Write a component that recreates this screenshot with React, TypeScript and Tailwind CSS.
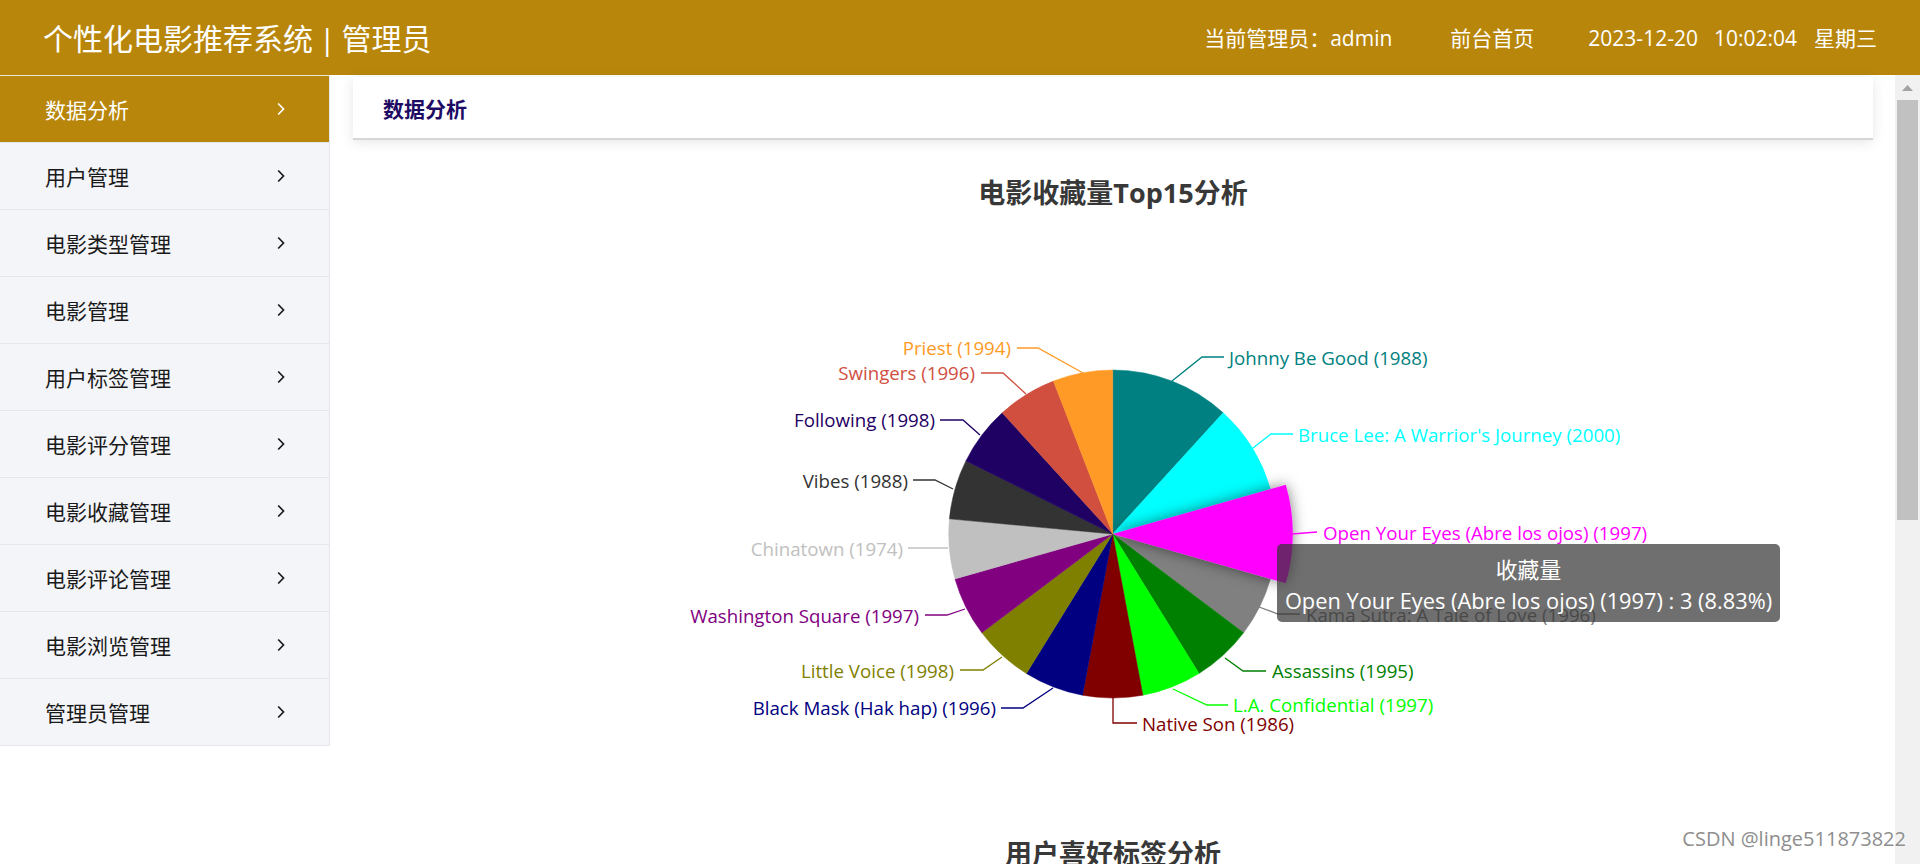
import React from "react";

const OX = 353;
const OY = 208;
const CX = 1112.7 - OX;
const CY = 534 - OY;
const R = 164;
const LY = -2;

type Item = {
  name: string;
  v: number;
  c: string;
  line: number[][];
  t: number[];
  a: "start" | "end";
  hl?: boolean;
};

const items: Item[] = [
  { name: "Johnny Be Good (1988)", v: 4, c: "#008080", line: [[1172, 381], [1202, 359], [1224, 359]], t: [1229, 359], a: "start" },
  { name: "Bruce Lee: A Warrior's Journey (2000)", v: 3, c: "#00ffff", line: [[1253, 448], [1271, 436], [1293, 436]], t: [1298, 436], a: "start" },
  { name: "Open Your Eyes (Abre los ojos) (1997)", v: 3, c: "#ff00ff", line: [[1292, 534], [1317, 534]], t: [1323, 534], a: "start", hl: true },
  { name: "Kama Sutra: A Tale of Love (1996)", v: 2, c: "#808080", line: [[1259, 607], [1278, 616], [1300, 616]], t: [1306, 616], a: "start" },
  { name: "Assassins (1995)", v: 2, c: "#008000", line: [[1225, 658], [1243, 673], [1266, 673]], t: [1272, 672], a: "start" },
  { name: "L.A. Confidential (1997)", v: 2, c: "#00ff00", line: [[1173, 689], [1207, 707], [1228, 707]], t: [1233, 706], a: "start" },
  { name: "Native Son (1986)", v: 2, c: "#800000", line: [[1113, 698], [1113, 725], [1137, 725]], t: [1142, 725], a: "start" },
  { name: "Black Mask (Hak hap) (1996)", v: 2, c: "#000080", line: [[1053, 688], [1023, 710], [1001, 710]], t: [996, 709], a: "end" },
  { name: "Little Voice (1998)", v: 2, c: "#808000", line: [[1002, 657], [983, 672], [960, 672]], t: [954, 672], a: "end" },
  { name: "Washington Square (1997)", v: 2, c: "#800080", line: [[965, 609], [947, 617], [925, 617]], t: [919, 617], a: "end" },
  { name: "Chinatown (1974)", v: 2, c: "#c0c0c0", line: [[948, 548], [933, 550], [908, 550]], t: [903, 550], a: "end" },
  { name: "Vibes (1988)", v: 2, c: "#333333", line: [[953, 489], [935, 482], [913, 482]], t: [908, 482], a: "end" },
  { name: "Following (1998)", v: 2, c: "#1f0063", line: [[980, 435], [963, 422], [940, 422]], t: [935, 421], a: "end" },
  { name: "Swingers (1996)", v: 2, c: "#d04f3f", line: [[1026, 394], [1003, 375], [981, 375]], t: [975, 374], a: "end" },
  { name: "Priest (1994)", v: 2, c: "#ff9a27", line: [[1083, 373], [1038, 350], [1017, 350]], t: [1011, 349], a: "end" },
];

function arcPath(r: number, a0: number, a1: number) {
  const p = (a: number) => {
    const rad = (a * Math.PI) / 180;
    return `${(CX + r * Math.sin(rad)).toFixed(2)},${(CY - r * Math.cos(rad)).toFixed(2)}`;
  };
  const large = a1 - a0 > 180 ? 1 : 0;
  return `M${CX},${CY} L${p(a0)} A${r},${r} 0 ${large} 1 ${p(a1)} Z`;
}

const menu = [
  "数据分析",
  "用户管理",
  "电影类型管理",
  "电影管理",
  "用户标签管理",
  "电影评分管理",
  "电影收藏管理",
  "电影评论管理",
  "电影浏览管理",
  "管理员管理",
];

function Chevron() {
  return (
    <svg width="8" height="14" viewBox="0 0 8 14" fill="none">
      <polyline points="1.2,1.5 6.5,7 1.2,12.5" stroke="currentColor" strokeWidth="1.7" strokeLinejoin="miter" />
    </svg>
  );
}

function PieChart() {
  const total = items.reduce((s, i) => s + i.v, 0);
  let acc = 0;
  const slices = items.map((it) => {
    const a0 = (acc / total) * 360;
    acc += it.v;
    const a1 = (acc / total) * 360;
    return { ...it, a0, a1 };
  });
  const hl = slices.find((s) => s.hl)!;
  return (
    <svg width="1520" height="600" viewBox="0 0 1520 600" className="block">
      <defs>
        <filter id="sh" x="-50%" y="-50%" width="200%" height="200%">
          <feDropShadow dx="0" dy="0" stdDeviation="7" floodColor="#000" floodOpacity="0.5" />
        </filter>
      </defs>
      {slices
        .filter((s) => !s.hl)
        .map((s) => (
          <path key={s.name} d={arcPath(R, s.a0, s.a1)} fill={s.c} stroke={s.c} strokeWidth="0.5" />
        ))}
      <path d={arcPath(180, hl.a0, hl.a1)} fill={hl.c} filter="url(#sh)" />
      {items.map((it) => (
        <g key={it.name}>
          <polyline
            points={it.line.map((p, i) => `${p[0] - OX},${p[1] - OY + (i === 0 ? 0 : LY)}`).join(" ")}
            fill="none"
            stroke={it.c}
            strokeWidth="1.3"
          />
          <text
            x={it.t[0] - OX}
            y={it.t[1] - OY + LY}
            textAnchor={it.a}
            dominantBaseline="central"
            fill={it.c}
            fontSize="18.7"
            fontFamily="'Open Sans', 'Noto Sans CJK SC', sans-serif"
          >
            {it.name}
          </text>
        </g>
      ))}
    </svg>
  );
}

export default function App() {
  return (
    <div className="relative flex h-[864px] w-[1920px] flex-col overflow-hidden bg-white font-['Open_Sans','Noto_Sans_CJK_SC',sans-serif]">
      <header className="flex h-[75px] shrink-0 items-center justify-between bg-[#b8860b] px-[43px] text-white">
        <div className="flex translate-y-[1px] items-center text-[30px] leading-none">
          <span>个性化电影推荐系统</span>
          <span className="mx-[6px]">|</span>
          <span>管理员</span>
        </div>
        <div className="flex translate-y-[1px] items-center text-[21px] leading-none">
          <span>当前管理员：admin</span>
          <span className="ml-[58px]">前台首页</span>
          <span className="ml-[54px]">2023-12-20</span>
          <span className="ml-[16px]">10:02:04</span>
          <span className="ml-[17px]">星期三</span>
        </div>
      </header>

      <div className="flex min-h-0 flex-1">
        <aside className="w-[330px] shrink-0 border-t border-[#ece6d6]">
          {menu.map((m, i) => (
            <div
              key={m}
              className={
                i === 0
                  ? "flex h-[67px] items-center justify-between border-b border-r border-[#e4e7ed] bg-[#b8860b] pl-[45px] pr-[44px] text-[21px] text-white"
                  : "flex h-[67px] items-center justify-between border-b border-r border-[#e4e7ed] bg-[#f4f5f9] pl-[45px] pr-[44px] text-[21px] text-[#1a1a1a]"
              }
            >
              <span className="translate-y-[2px]">{m}</span>
              <Chevron />
            </div>
          ))}
        </aside>

        <main className="flex min-w-0 flex-1">
          <div className="min-w-0 flex-1 pl-[23px] pr-[22px] pt-[2px]">
            <div className="flex h-[63px] items-center border-b-2 border-[#d6d6d6] bg-white pl-[30px] shadow-[0_2px_12px_0_rgba(0,0,0,0.1)]">
              <span className="translate-y-[2px] text-[21px] font-bold text-[#1e0b63]">数据分析</span>
            </div>
            <div className="mt-[38px] text-center text-[27px] font-bold leading-[30px] text-[#383838]">
              电影收藏量Top15分析
            </div>
            <div className="relative">
              <PieChart />
              <div className="absolute left-[924px] top-[336px] flex h-[78px] w-[503px] flex-col items-center rounded-[5px] bg-[rgba(50,50,50,0.7)] pt-[10px] text-[21.8px] leading-[31px] text-white">
                <span>收藏量</span>
                <span>Open Your Eyes (Abre los ojos) (1997) : 3 (8.83%)</span>
              </div>
            </div>
            <div className="mt-[28px] text-center text-[27px] font-bold leading-[36px] text-[#383838]">
              用户喜好标签分析
            </div>
          </div>

          <div className="flex w-[25px] shrink-0 flex-col items-center bg-[#f1f1f1]">
            <div className="flex h-[25px] w-full items-center justify-center">
              <svg width="11" height="6" viewBox="0 0 11 6">
                <polygon points="0,6 5.5,0 11,6" fill="#a3a3a3" />
              </svg>
            </div>
            <div className="h-[420px] w-[21px] bg-[#c1c1c1]" />
          </div>
        </main>
      </div>

      <div className="absolute bottom-[10px] right-[14px] text-[20px] text-[#8e8e8e] [text-shadow:0_0_2px_#fff]">
        CSDN @linge511873822
      </div>
    </div>
  );
}
